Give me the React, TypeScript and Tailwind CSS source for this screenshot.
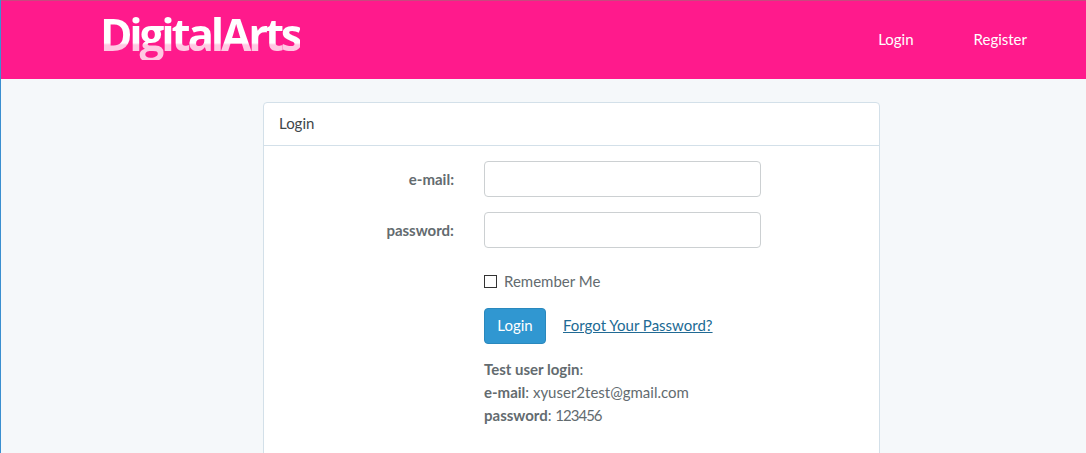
const App = () => {
  return (
    <div className="h-[453px] overflow-hidden bg-[#f5f8fa] border-l border-l-[#3a8fd0] font-['Lato','Liberation_Sans',sans-serif] text-[15px] text-[#636b6f]">
      {/* Navbar */}
      <header className="-ml-px flex h-[79px] items-center justify-between border-t border-t-[#c9487f] bg-[#ff1a8c] pl-[100px] pr-[59px]">
        <a className="relative -top-[6px] bg-[linear-gradient(to_bottom,#ffffff_0%,#ffffff_67%,#ffc8e2_71%,#ffc8e2_100%)] bg-clip-text font-['Open_Sans',sans-serif] text-[44px] font-bold leading-[52px] tracking-[-3.2px] text-transparent">
          DigitalArts
        </a>
        <nav className="mb-[2px] flex gap-[60px] text-white">
          <a>Login</a>
          <a>Register</a>
        </nav>
      </header>

      {/* Card */}
      <main className="pt-[23px]">
        <div className="ml-[262px] h-[400px] w-[617px] rounded-[4px] border border-[#d3e0e9] bg-white">
          <div className="flex h-[43px] items-center border-b border-[#d3e0e9] px-[15px] pb-[2px] text-[#3f4649]">Login</div>

          <form className="pt-[15px]">
            <div className="flex items-center">
              <label className="w-[190px] text-right font-bold">e-mail:</label>
              <input className="ml-[30px] h-[36px] w-[277px] rounded-[4px] border border-[#ccd0d2] bg-white" />
            </div>
            <div className="mt-[15px] flex items-center">
              <label className="w-[190px] text-right font-bold">password:</label>
              <input type="password" className="ml-[30px] h-[36px] w-[277px] rounded-[4px] border border-[#ccd0d2] bg-white" />
            </div>

            <div className="ml-[220px]">
              <label className="mt-[23px] flex items-center gap-[7px] leading-[20px]">
                <span className="h-[13px] w-[13px] border border-[#333]" />
                Remember Me
              </label>
              <div className="mt-[17px] flex items-center gap-[17px]">
                <button type="button" className="h-[36px] w-[62px] rounded-[4px] border border-[#2a88bd] bg-[#3097d1] pb-[2px] text-white">Login</button>
                <a className="mb-[2px] text-[#216a94] underline">Forgot Your Password?</a>
              </div>
              <div className="mt-[14px] leading-[23px]">
                <p><strong>Test user login</strong>:</p>
                <p><strong>e-mail</strong>: xyuser2test@gmail.com</p>
                <p><strong>password</strong>: <span className="tracking-[-1px]">123456</span></p>
              </div>
            </div>
          </form>
        </div>
      </main>
    </div>
  );
};

export default App;
